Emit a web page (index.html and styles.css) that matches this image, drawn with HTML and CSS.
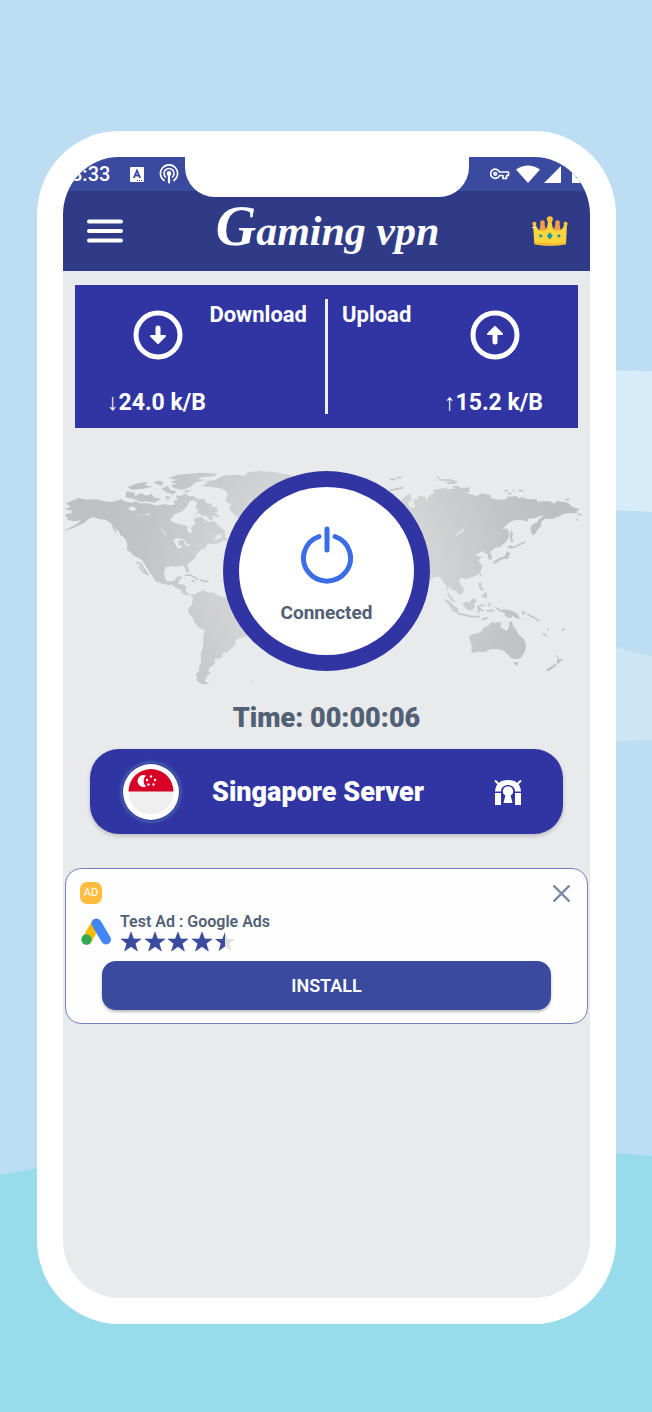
FILE: index.html
```html
<!DOCTYPE html>
<html lang="en">
<head>
<meta charset="utf-8">
<meta name="viewport" content="width=device-width, initial-scale=1">
<title>Gaming vpn</title>
<link rel="stylesheet" href="styles.css">
</head>
<body>
<svg class="backdrop" viewBox="0 0 652 1412" preserveAspectRatio="none" aria-hidden="true">
  <path fill="#d6ecf8" d="M560 375Q610 369 652 371V512Q620 510 560 509Z"/>
  <path fill="#cde6f5" d="M560 620L617 647Q634 654 652 656V740Q620 741 560 746Z"/>
  <path fill="#98dbea" d="M0 1175Q160 1144 330 1143T652 1156V1412H0Z"/>
</svg>
<main class="phone">
  <div class="screen">
    <div class="status">
      <span class="status-time">8:33</span>
      <svg class="s-app" viewBox="0 0 14 15" aria-hidden="true"><rect width="14" height="15" rx="1" fill="#fff"/><path d="M3.800 11 7 3.500 10.200 11M5 8.500H9" fill="none" stroke="#3a4a9e" stroke-width="1.800"/><path d="M7 13.500h6" stroke="#3a4a9e" stroke-dasharray="1 1"/></svg>
      <svg class="s-cast" viewBox="0 0 20 20" fill="none" stroke="#fff" stroke-width="1.600" stroke-linecap="round" aria-hidden="true"><path d="M5 16.500A8.600 8.600 0 1 1 15 16.500M6.500 13A5 5 0 1 1 13.500 13"/><circle cx="10" cy="9.500" r="1.600" fill="#fff"/><path d="M10 10V18.500" stroke-width="2.200"/></svg>
      <span class="grow"></span>
      <svg class="s-key" viewBox="0 0 20 12" fill="none" stroke="#fff" stroke-width="1.700" stroke-linejoin="round" aria-hidden="true"><path d="M9.500 4H18.500V7.500H16.500V10.500H13V7.500H9.500A4.600 4.600 0 1 1 9.500 4Z"/><circle cx="5.300" cy="5.800" r="1.300"/></svg>
      <svg class="s-wifi" viewBox="0 0 24 18" aria-hidden="true"><path fill="#fff" d="M0 4.500Q12-3.500 24 4.500L12 18Z"/></svg>
      <svg class="s-signal" viewBox="0 0 17 17" aria-hidden="true"><path fill="#fff" d="M17 0V17H0Z"/></svg>
      <svg class="s-battery" viewBox="0 0 14 18" aria-hidden="true"><path fill="#fff" d="M0 2H4V0H10V2H14V18H0Z"/><path d="M6 9 4 13" stroke="#3a4a9e"/></svg>
    </div>
    <div class="notch"></div>
    <header class="appbar">
      <button class="icon-btn" type="button" aria-label="Menu"><svg class="menu" viewBox="0 0 36 24" stroke="#fff" stroke-width="4" stroke-linecap="round" aria-hidden="true"><path d="M2 2.500H34M2 12H34M2 21.500H34"/></svg></button>
      <h1 class="logo"><span class="logo-cap">G</span>aming vpn</h1>
      <button class="icon-btn" type="button" aria-label="Premium"><svg class="crown" viewBox="638 288 107 88" aria-hidden="true">
        <g fill="#f2a047"><path d="M658 345 664 308H674L684 345ZM698 345 709 308H719L726 345Z"/><circle cx="669" cy="308" r="7"/><circle cx="714" cy="308" r="7"/></g>
        <path fill="#ffd53a" d="M645 372 641 313H649Q654 329 662 330Q669 334 676 331Q685 326 686 298H696Q697 326 706 331Q713 334 720 330Q729 329 734 313H742L739 372Q692 381 645 372Z"/>
        <g fill="#ffc43a"><circle cx="645" cy="311" r="6"/><circle cx="691" cy="298" r="9"/><circle cx="738" cy="311" r="6"/></g>
        <path d="M646 368Q691 376 738 368" fill="none" stroke="#f9bb30" stroke-width="6"/>
        <g fill="#159ba4"><path d="M691 336 700 347 691 358 682 347Z"/><circle cx="664" cy="347" r="5"/><circle cx="718" cy="347" r="5"/></g>
        <path d="M637 322H651" stroke="#fff4c8" stroke-width="3"/>
      </svg></button>
    </header>

    <section class="stats" aria-label="Traffic">
      <div class="stat down">
        <svg class="round" viewBox="0 0 50 50" fill="none" stroke="#fff" aria-hidden="true"><circle cx="25" cy="25" r="22" stroke-width="5"/><path d="M25 18V28" stroke-width="5" stroke-linecap="round"/><path d="M18 26H32L25 33Z" fill="#fff" stroke-width="2" stroke-linejoin="round"/></svg>
        <h2 class="stat-name">Download</h2>
        <p class="stat-value">↓24.0 k/B</p>
      </div>
      <div class="rule"></div>
      <div class="stat up">
        <h2 class="stat-name">Upload</h2>
        <svg class="round" viewBox="0 0 50 50" fill="none" stroke="#fff" aria-hidden="true"><circle cx="25" cy="25" r="22" stroke-width="5"/><path d="M25 32V22" stroke-width="5" stroke-linecap="round"/><path d="M18 24H32L25 17Z" fill="#fff" stroke-width="2" stroke-linejoin="round"/></svg>
        <p class="stat-value">↑15.2 k/B</p>
      </div>
    </section>

    <section class="hero">
      <svg class="map" viewBox="63 460 527 230" aria-hidden="true">
        <defs>
        <radialGradient id="west" gradientUnits="userSpaceOnUse" cx="798" cy="405" r="690"><stop offset=".3" stop-color="#d8d9da"/><stop offset=".8" stop-color="#c3c4c5"/><stop offset="1" stop-color="#bfc0c1"/></radialGradient>
        <radialGradient id="east" gradientUnits="userSpaceOnUse" cx="-192" cy="405" r="690"><stop offset=".4" stop-color="#d6d7d8"/><stop offset=".8" stop-color="#c3c4c5"/><stop offset="1" stop-color="#bebfc0"/></radialGradient></defs>
        <g transform="translate(60 440) scale(.33333)" fill="url(#west)" stroke-linejoin="round">
          <path d="M13 207 32 200 17 190 35 183 55 174 80 179 110 178 130 183 150 186 170 183 185 177 192 184 215 188 228 184 240 190 265 190 290 197 315 192 330 196 343 194 340 182 353 181 347 166 365 168 376 160 386 169 400 169 415 178 433 176 440 190 457 192 454 201 472 201 470 211 476 217 462 216 480 229 470 231 456 224 461 236 450 242 440 228 424 226 418 218 405 224 401 238 412 232 425 230 434 240 448 246 462 242 472 254 482 262 498 275 484 283 462 287 471 291 458 301 486 294 491 301 478 309 456 313 452 308 440 315 437 325 421 330 408 344 407 353 393 363 381 374 389 395 381 398 371 377 350 380 331 379 318 382 312 397 314 413 322 424 343 422 350 411 363 408 365 414 359 419 355 432 369 433 379 439 377 454 389 464 405 463 402 472 391 466 380 466 365 459 363 450 347 444 339 436 320 434 303 430 286 423 278 409 266 392 257 377 246 360 234 353 221 347 211 336 201 330 202 315 198 301 189 289 181 286 177 274 163 264 151 248 136 239 117 237 99 231 86 237 75 247 60 254 38 265 10 272 38 259 55 249 63 240 45 244 20 239 26 232 16 231 18 222 35 219 37 212Z"/>
          <path d="M405 463 418 455 431 450 443 457 463 458 478 469 500 472 600 560 568 588 542 593 528 600 525 616 514 625 504 636 487 640 488 652 475 657 464 657 466 670 448 684 445 695 453 697 440 710 434 724 448 732 427 733 412 724 408 700 418 695 416 684 423 668 423 640 430 618 430 590 434 572 414 560 405 550 397 532 386 520 385 506 396 493 399 473Z"/>
          <path d="M425 138 446 128 430 125 465 120 488 107 530 104 556 108 562 97 600 93 640 96 680 103 720 115 720 220 550 242 528 229 514 214 508 205 514 190 502 190 496 180 503 167 500 157 486 146 465 142Z"/>
          <path d="M325 113 355 104 420 98 472 101 463 109 430 111 410 118 438 119 405 128 390 142 368 149 342 145 332 135 350 132 332 126 350 120ZM203 141 236 129 264 126 255 135 278 140 245 147 216 149ZM198 153 223 158 225 169 244 159 258 167 275 161 282 172 303 177 284 188 262 184 242 186 220 176 197 172ZM278 127 300 122 312 128 303 137ZM303 147 322 137 332 151 350 154 339 164 323 158ZM315 168 332 170 323 183ZM372 152 392 150 381 159ZM379 194 392 201 377 211 359 201ZM484 281 496 280 494 295 507 293 499 304 484 297Z"/>
          <path fill="none" stroke="#c6c7c8" stroke-width="5" d="M229 367 243 373 264 404 250 397 237 378M158 260 169 278M374 406 391 405 415 419M420 420 436 424 445 424M395 422 405 424M575 729 578 729"/>
          <path fill="#e8eaeb" d="M330 240 345 222 365 215 377 204 389 184 403 181 412 188 406 204 416 211 405 225 401 240 406 250 392 264 397 274 389 281 382 270 383 259 362 253 345 250ZM204 206 215 199 231 206 219 214ZM228 231 253 222 244 228ZM340 300 354 293 367 299 356 303 357 318 366 314 365 323 352 325ZM370 303 383 311 394 318 378 317Z"/>
          <path fill="none" stroke="#e8eaeb" stroke-width="3" d="M304 267 310 276 318 285M255 225 270 223M345 299 371 299 381 317"/>
        </g>
        <g transform="translate(390 440) scale(.33333)" fill="url(#east)" stroke-linejoin="round">
          <path d="M-20 220 38 178 51 165 63 162 64 180 54 190 62 204 76 202 71 186 76 174 87 184 82 166 93 169 107 171 109 186 115 171 130 158 130 150 165 144 175 147 193 147 187 138 205 137 211 144 237 142 240 156 224 157 240 162 258 169 275 160 304 166 300 173 320 179 347 178 353 170 381 168 383 174 400 172 407 177 440 178 442 185 478 183 493 191 500 183 534 188 546 200 570 208 560 213 563 219 535 220 520 222 506 230 485 237 465 236 453 246 454 258 442 269 434 284 426 285 421 267 426 254 441 247 450 234 462 227 452 227 436 234 415 236 412 244 392 240 372 241 355 249 347 259 335 266 351 266 357 276 356 293 348 305 338 314 329 322 316 323 301 335 306 349 304 361 294 356 293 343 283 340 279 332 258 343 260 349 276 349 265 362 277 378 273 393 259 407 238 414 225 418 218 412 205 421 214 437 221 443 220 456 206 465 199 454 187 449 177 438 174 455 187 473 197 489 187 485 173 466 171 441 160 427 155 417 145 409 134 411 125 416 90 420 0 300Z"/>
          <path d="M237 591 244 584 263 580 275 573 280 563 294 557 305 547 319 551 315 545 335 548 331 562 350 573 357 561 358 544 366 546 371 560 378 568 385 583 402 597 409 617 405 634 393 653 379 658 363 655 356 646 342 633 326 627 302 628 284 636 263 635 250 639 244 636 245 617ZM370 667 386 667 380 679ZM495 641 505 651 507 659 520 657 505 671 500 665 504 656ZM467 690 485 679 500 668 497 677 477 694Z"/>
          <path d="M217 492 226 486 238 486 250 473 260 482 253 491 255 501 246 512 228 508ZM159 477 174 480 187 492 205 507 204 521 188 514 177 496ZM314 502 325 503 333 510 347 508 366 512 383 522 389 535 400 539 378 535 368 527 363 535 345 529 344 519 325 512ZM268 398 275 402 270 411ZM266 427 276 430 274 443 284 448 276 453 267 443ZM273 465 289 463 292 475 281 473ZM364 270 369 281 366 293 371 305 363 307 359 285ZM359 316 376 321 365 326 351 323ZM353 332 360 340 354 357 340 357 327 363 311 374 309 365 327 354 343 349Z"/>
          <path fill="none" stroke="#c5c6c7" stroke-width="5" d="M204 521 226 525 246 530 270 530M275 539 293 533M264 497 266 518M265 498 284 495M266 505 281 513M298 489 299 500M290 512 312 512M285 456 289 465M395 514 405 520 397 522M412 522 440 538 448 542M458 581 471 587M515 571 525 566M472 567 477 569M146 120 180 120 201 128M170 127 194 130M343 153 353 152M368 151 373 152M387 152 400 152M353 160 365 162M526 179 538 179M562 223 575 224M558 239 564 240M0 119 18 117M22 113 34 113M140 112 148 113M0 151 40 143M372 322 405 306"/>
          <path fill="none" stroke="#e3e4e5" stroke-width="5" d="M198 285 214 276 222 266"/>
        </g>
      </svg>
      <button class="power" type="button">
        <svg class="power-icon" viewBox="0 0 54 58" fill="none" stroke="#3a6de6" stroke-width="5" stroke-linecap="round" aria-hidden="true"><path d="M27 3V24M19 10.500A23.500 23 0 1 0 35 10.500"/></svg>
        <span>Connected</span>
      </button>
    </section>
    <p class="timer">Time: 00:00:06</p>

    <button class="server" type="button">
      <svg class="flag" viewBox="0 0 58 58" aria-hidden="true"><circle cx="29" cy="29" r="28" fill="#fff"/><circle cx="29" cy="29" r="22.500" fill="#efefef"/><path d="M6.500 28.500A22.500 22.500 0 0 1 51.500 28.500Z" fill="#d80027"/><path d="M24 12.500A6 6 0 1 0 24 23.500A7.500 7.500 0 0 1 24 12.500Z" fill="#fff"/><g fill="#fff"><circle cx="29" cy="13.500" r="1.200"/><circle cx="33" cy="17" r="1.200"/><circle cx="31.500" cy="21.500" r="1.200"/><circle cx="26.500" cy="21.500" r="1.200"/><circle cx="25" cy="17" r="1.200"/></g></svg>
      <span class="server-name">Singapore Server</span>
      <svg class="gate" viewBox="0 0 28 26" aria-hidden="true"><path fill="#fff" d="M1 12.500Q2 1 14 1T27 12.500H21Q20.500 6 14 6T7 12.500ZM1 14H7V26H1ZM21 14H27V26H21ZM14 7.500A4.800 4.800 0 0 1 16.600 16.500L18.500 24H9.500L11.400 16.500A4.800 4.800 0 0 1 14 7.500Z"/><path stroke="#fff" stroke-width="2" d="M1 1.500 5 5.500M27 1.500 23 5.500"/></svg>
    </button>

    <aside class="ad">
      <div class="ad-top">
        <span class="badge">AD</span>
        <button class="icon-btn" type="button" aria-label="Close ad"><svg class="close" viewBox="0 0 18 18" stroke="#7a8aa3" stroke-width="2.200" stroke-linecap="round" aria-hidden="true"><path d="M2 2 16 16M16 2 2 16"/></svg></button>
      </div>
      <div class="ad-body">
        <svg class="ads-logo" viewBox="0 0 31 27" aria-hidden="true" stroke-width="10" stroke-linecap="round"><path stroke="#fbbc04" d="M15 6 6 21.500"/><path stroke="#4285f4" d="M15.500 5.500 25 21.500"/><circle cx="5.500" cy="21.500" r="5.200" fill="#34a853"/></svg>
        <div>
          <p class="ad-title">Test Ad : Google Ads</p>
          <svg class="stars" viewBox="-1 0 116 20" role="img" aria-label="4.5 out of 5">
            <defs><path id="star" d="M10 0 12.600 7H20L14.200 11.500 16.400 19 10 14.500 3.600 19 5.800 11.500 0 7H7.400Z"/><clipPath id="half"><rect width="10" height="20"/></clipPath></defs>
            <g fill="#3a4a9e" stroke="#3a4a9e" stroke-width=".6"><use href="#star"/><use href="#star" x="24"/><use href="#star" x="47"/><use href="#star" x="71"/></g>
            <g transform="translate(94)"><use href="#star" fill="#dedede"/><use href="#star" fill="#3a4a9e" clip-path="url(#half)"/></g>
          </svg>
        </div>
      </div>
      <button class="install" type="button">INSTALL</button>
    </aside>
  </div>
</main>
</body>
</html>
```

FILE: styles.css
```css
* { box-sizing: border-box; }
body {
  margin: 0;
  min-height: 100vh;
  display: flex;
  padding: 131px 36px 88px 37px;
  background: #bcddf2;
  font-family: Roboto, "Noto Sans", sans-serif;
  position: relative;
}
h1, h2, p { margin: 0; }
button { font: inherit; border: 0; cursor: pointer; }
svg { display: block; flex: none; }
.backdrop { position: absolute; inset: 0; width: 100%; height: 100%; }
.phone {
  flex: 1;
  min-width: 0;
  display: flex;
  padding: 26px;
  background: #fff;
  border-radius: 82px / 84px;
  position: relative;
}
.screen {
  flex: 1;
  min-width: 0;
  display: flex;
  flex-direction: column;
  background: #e8eaeb;
  border-radius: 56px / 58px;
  overflow: hidden;
  position: relative;
}
.status {
  height: 34px;
  display: flex;
  align-items: center;
  padding: 0 4px 0 8px;
  background: #3a4a9e;
  color: #fff;
}
.status-time { font-size: 20px; font-weight: 500; width: 59px; }
.grow { flex: 1; }
.s-app { width: 14px; }
.s-cast { width: 20px; margin-left: 15px; }
.s-key { width: 20px; margin-right: 6px; }
.s-wifi { width: 24px; margin-right: 4px; }
.s-signal { width: 17px; margin-right: 11px; }
.s-battery { width: 14px; }
.notch {
  position: absolute;
  top: 0;
  left: 50%;
  transform: translateX(-50%);
  width: 284px;
  height: 40px;
  background: #fff;
  border-radius: 0 0 30px 30px;
}
.appbar {
  height: 80px;
  display: flex;
  align-items: center;
  justify-content: space-between;
  padding: 0 22px 0 24px;
  background: #2f3b86;
}
.icon-btn { padding: 0; background: none; }
.menu { width: 36px; }
.crown { width: 36px; }
.logo {
  display: flex;
  align-items: baseline;
  white-space: pre;
  padding-bottom: 6px;
  font: italic bold 42px/60px "Liberation Serif", serif;
  color: #fff;
}
.logo-cap { font-size: 56px; }
.stats {
  display: flex;
  margin: 14px 12px 0;
  padding: 14px 0;
  background: #3035a3;
  color: #fff;
}
.stat {
  flex: 1;
  display: grid;
  grid-template-rows: 66px 49px;
}
.down { grid-template-columns: 166px 1fr; }
.up { grid-template-columns: 1fr 166px; }
.rule { width: 3px; background: #eceefa; }
.round { width: 50px; grid-row: 1; justify-self: center; margin-top: 11px; }
.down .round, .down .stat-value { grid-column: 1; }
.up .round, .up .stat-value { grid-column: 2; }
.stat-name {
  grid-area: 1 / 1 / 2 / -1;
  font-size: 22px;
  line-height: 32px;
  font-weight: 700;
}
.down .stat-name { justify-self: end; margin-right: 18px; }
.up .stat-name { margin-left: 14px; }
.stat-value {
  grid-row: 2;
  align-self: end;
  padding-right: 3px;
  text-align: center;
  white-space: nowrap;
  font-size: 23px;
  line-height: 22px;
  font-weight: 700;
}
.hero { display: grid; margin-top: 32px; }
.map { grid-area: 1 / 1; width: 100%; }
.power {
  grid-area: 1 / 1;
  justify-self: center;
  align-self: start;
  margin-top: 11px;
  width: 207px;
  height: 200px;
  padding: 9px 0 0;
  display: flex;
  flex-direction: column;
  align-items: center;
  justify-content: center;
  gap: 17px;
  border: 16px solid #3035a3;
  border-radius: 50%;
  background: #fff;
  color: #526075;
  font-size: 19px;
  line-height: 24px;
  font-weight: 700;
}
.power-icon { width: 54px; }
.timer {
  margin-top: 12px;
  text-align: center;
  font-size: 27px;
  line-height: 32px;
  font-weight: 900;
  color: #526075;
}
.server {
  margin: 15px 27px 0;
  height: 85px;
  display: flex;
  align-items: center;
  padding: 0 41px 0 32px;
  border-radius: 29px;
  background: #3035a3;
  box-shadow: 0 2px 4px #0003;
  color: #fff;
}
.flag { width: 58px; border-radius: 50%; box-shadow: 0 0 4px #5b9bb5; }
.server-name { margin: 0 auto 0 32px; font-size: 27px; font-weight: 900; }
.gate { width: 28px; }
.ad {
  margin: 34px 2px 0;
  padding: 13px 14px;
  border: 1px solid #7680bd;
  border-radius: 16px;
  background: #fefefe;
}
.ad-top { display: flex; justify-content: space-between; align-items: center; padding-right: 2px; }
.badge {
  width: 22px;
  height: 22px;
  border-radius: 7px;
  background: #ffbd40;
  color: #fff;
  font-size: 11px;
  line-height: 22px;
  text-align: center;
}
.close { width: 19px; }
.ad-body { display: flex; align-items: center; gap: 8px; padding: 7px 1px 0; }
.ads-logo { width: 31px; }
.ad-title { font-size: 16px; line-height: 21px; font-weight: 600; color: #526075; }
.stars { width: 116px; }
.install {
  display: block;
  width: calc(100% - 44px);
  height: 49px;
  margin: 9px 22px 0;
  border-radius: 14px;
  background: #3a4a9e;
  box-shadow: 0 2px 3px #0004;
  color: #fff;
  font-size: 18px;
  font-weight: 600;
}
```
